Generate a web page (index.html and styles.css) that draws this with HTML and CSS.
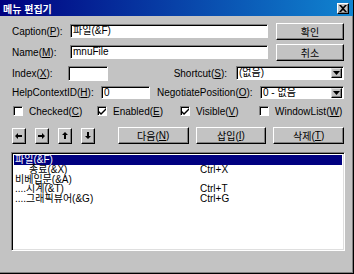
FILE: index.html
```html
<!DOCTYPE html>
<html lang="ko">
<head>
    <meta charset="UTF-8">
    <title>메뉴 편집기</title>
    <link rel="stylesheet" href="styles.css">
</head>
<body>

<div class="dialog">
    <!-- Title bar -->
    <div class="titlebar">
        <span class="title">메뉴 편집기</span>
        <button class="close-btn">
            <svg width="8" height="7" viewBox="0 0 8 7"><path d="M0 0h2l2 2 2-2h2L5 3.5 8 7H6L4 5 2 7H0l3-3.5z" fill="#000"/></svg>
        </button>
    </div>

    <div class="body">
        <!-- Caption / Name -->
        <div class="row row-1">
            <label class="lbl lbl-main">Caption(<u>P</u>):</label>
            <div class="field field-wide">파일(&amp;F)</div>
            <button class="btn btn-side">확인</button>
        </div>
        <div class="row row-2">
            <label class="lbl lbl-main">Name(<u>M</u>):</label>
            <div class="field field-wide">mnuFile</div>
            <button class="btn btn-side">취소</button>
        </div>

        <!-- Index / Shortcut -->
        <div class="row row-3">
            <label class="lbl lbl-index">Index(<u>X</u>):</label>
            <div class="field field-index"></div>
            <label class="lbl lbl-shortcut">Shortcut(<u>S</u>):</label>
            <div class="field combo combo-shortcut">
                <span class="combo-text">(없음)</span>
                <span class="combo-btn"><svg width="7" height="4" viewBox="0 0 7 4"><path d="M0 0h7L3.5 4z" fill="#000"/></svg></span>
            </div>
        </div>

        <!-- HelpContextID / NegotiatePosition -->
        <div class="row row-4">
            <label class="lbl lbl-help">HelpContextID(<u>H</u>):</label>
            <div class="field field-help">0</div>
            <label class="lbl lbl-neg">NegotiatePosition(<u>O</u>):</label>
            <div class="field combo combo-neg">
                <span class="combo-text">0 - 없음</span>
                <span class="combo-btn"><svg width="7" height="4" viewBox="0 0 7 4"><path d="M0 0h7L3.5 4z" fill="#000"/></svg></span>
            </div>
        </div>

        <!-- Checkboxes -->
        <div class="row row-checks">
            <div class="check check-1"><span class="box"></span>Checked(<u>C</u>)</div>
            <div class="check check-2"><span class="box"><svg width="7" height="7" viewBox="0 0 7 7"><path d="M0 3l2 2 5-5v2L2 7 0 5z" fill="#000"/></svg></span>Enabled(<u>E</u>)</div>
            <div class="check check-3"><span class="box"><svg width="7" height="7" viewBox="0 0 7 7"><path d="M0 3l2 2 5-5v2L2 7 0 5z" fill="#000"/></svg></span>Visible(<u>V</u>)</div>
            <div class="check check-4"><span class="box"></span>WindowList(<u>W</u>)</div>
        </div>

        <!-- Arrow + action buttons -->
        <div class="row row-buttons">
            <button class="btn btn-arrow"><svg width="7" height="6" viewBox="0 0 7 6"><path d="M0 3L3 0v2h4v2H3v2z" fill="#000"/></svg></button>
            <button class="btn btn-arrow"><svg width="7" height="6" viewBox="0 0 7 6"><path d="M7 3L4 0v2H0v2h4v2z" fill="#000"/></svg></button>
            <button class="btn btn-arrow"><svg width="6" height="7" viewBox="0 0 6 7"><path d="M3 0l3 3H4v4H2V3H0z" fill="#000"/></svg></button>
            <button class="btn btn-arrow"><svg width="6" height="7" viewBox="0 0 6 7"><path d="M3 7l3-3H4V0H2v4H0z" fill="#000"/></svg></button>
            <button class="btn btn-action">다음(<u>N</u>)</button>
            <button class="btn btn-action">삽입(<u>I</u>)</button>
            <button class="btn btn-action">삭제(<u>T</u>)</button>
        </div>

        <!-- Menu list -->
        <div class="menu-list">
            <div class="item selected"><span class="item-name">파일(&amp;F)</span></div>
            <div class="item"><span class="item-name indent">종료(&amp;X)</span><span class="item-key">Ctrl+X</span></div>
            <div class="item"><span class="item-name">비베입문(&amp;A)</span></div>
            <div class="item"><span class="item-name">....시계(&amp;T)</span><span class="item-key">Ctrl+T</span></div>
            <div class="item"><span class="item-name">....그래픽뷰어(&amp;G)</span><span class="item-key">Ctrl+G</span></div>
        </div>
    </div>
</div>

</body>
</html>
```

FILE: styles.css
```css
* {
    margin: 0;
    padding: 0;
    box-sizing: border-box;
    font-family: 'Liberation Sans', 'Noto Sans CJK KR', sans-serif;
}

body {
    background-color: #c0c0c0;
    color: #000;
    font-size: 10px;
}

u {
    text-decoration: underline;
}

.dialog {
    width: 354px;
    height: 274px;
    background-color: #c3c3c3;
    border-right: 1px solid #000;
    border-bottom: 1px solid #000;
    box-shadow: inset -1px -1px 0 #808080;
}

/* Title bar */
.titlebar {
    height: 16px;
    display: flex;
    align-items: center;
    justify-content: space-between;
    padding: 0 4px 0 3px;
    background: linear-gradient(to right, #000080, #1084d0);
}

.title {
    color: #fff;
    font-weight: bold;
    font-size: 10px;
}

.close-btn {
    width: 12px;
    height: 11px;
    display: flex;
    align-items: center;
    justify-content: center;
    background-color: #c3c3c3;
    border: 1px solid;
    border-color: #fff #000 #000 #fff;
    box-shadow: inset -1px -1px 0 #808080;
}

/* Body */
.body {
    padding: 6px 9px 0 12px;
}

.row {
    display: flex;
    align-items: center;
}

.row-1 { height: 18px; }
.row-2 { height: 18px; margin-top: 3px; }
.row-3 { height: 16px; margin-top: 4px; }
.row-4 { height: 15px; margin-top: 4px; }
.row-checks { height: 12px; margin-top: 5px; }
.row-buttons { height: 17px; margin-top: 10px; }

.lbl {
    white-space: nowrap;
}

.lbl-main { width: 58px; }
.lbl-index { width: 56px; }
.lbl-help { width: 89px; }

.lbl-shortcut {
    flex: 1;
    text-align: right;
    padding-right: 9px;
}

.lbl-neg {
    flex: 1;
    margin-left: 7px;
}

/* Sunken fields */
.field {
    height: 14px;
    background-color: #fff;
    border: 1px solid;
    border-color: #808080 #fff #fff #808080;
    box-shadow: inset 1px 1px 0 #000;
    padding: 0 2px;
    line-height: 12px;
    white-space: nowrap;
}

.field-wide { width: 198px; }
.field-index { width: 40px; height: 15px; }
.field-help { width: 49px; height: 13px; line-height: 11px; }

.combo {
    display: flex;
    align-items: center;
    justify-content: space-between;
    padding: 0 1px 0 2px;
}

.combo-shortcut { width: 108px; }
.combo-neg { width: 84px; height: 13px; }

.combo-btn {
    width: 11px;
    height: 10px;
    display: flex;
    align-items: center;
    justify-content: center;
    background-color: #c3c3c3;
    border: 1px solid;
    border-color: #dfdfdf #000 #000 #dfdfdf;
    box-shadow: inset -1px -1px 0 #808080;
}

/* Raised buttons */
.btn {
    display: flex;
    align-items: center;
    justify-content: center;
    background-color: #c3c3c3;
    border: 1px solid;
    border-color: #fff #000 #000 #fff;
    box-shadow: inset -1px -1px 0 #808080;
    font-size: 10px;
    color: #000;
}

.btn-side {
    width: 68px;
    height: 17px;
    margin-left: 8px;
}

.btn-arrow {
    width: 14px;
    height: 16px;
    margin-right: 9px;
}

.btn-arrow:nth-child(4) {
    margin-right: 23px;
}

.btn-action {
    width: 71px;
    height: 17px;
    margin-right: 7px;
}

.btn-action:last-child {
    margin-right: 0;
}

/* Checkboxes */
.check {
    display: flex;
    align-items: center;
    white-space: nowrap;
}

.check-1 { width: 85px; padding-left: 1px; }
.check-2 { width: 83px; }
.check-3 { width: 79px; }

.box {
    width: 10px;
    height: 10px;
    margin-right: 6px;
    display: flex;
    align-items: center;
    justify-content: center;
    background-color: #fff;
    border: 1px solid;
    border-color: #808080 #fff #fff #808080;
    box-shadow: inset 1px 1px 0 #000;
}

/* Menu list */
.menu-list {
    margin-top: 8px;
    width: 334px;
    height: 99px;
    margin-left: -1px;
    background-color: #fff;
    border: 1px solid;
    border-color: #808080 #fff #fff #808080;
    box-shadow: inset 1px 1px 0 #000, inset -1px -1px 0 #dfdfdf;
    padding: 2px 2px;
}

.item {
    display: flex;
    height: 9.6px;
    line-height: 9.6px;
    white-space: nowrap;
}

.item.selected {
    height: 10px;
    line-height: 10px;
    background-color: #000080;
    color: #fff;
}

.item-name {
    width: 186px;
    padding-left: 1px;
}

.item-name.indent {
    padding-left: 15px;
}
```
